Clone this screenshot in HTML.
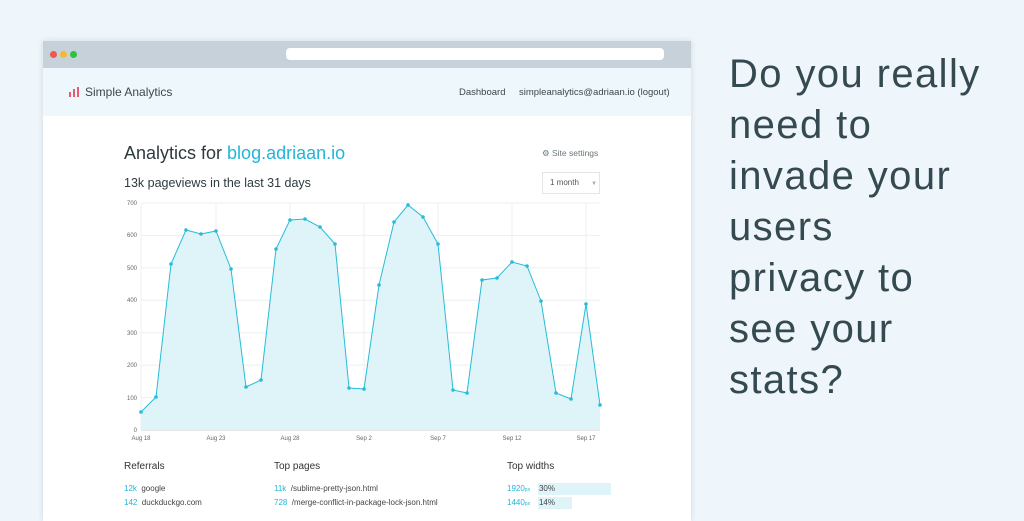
<!DOCTYPE html>
<html><head><style>
body{margin:0;width:1024px;height:512px;overflow:hidden;background:#eef6fb;font-family:"Liberation Sans",sans-serif;position:relative}
.win{position:absolute;left:43px;top:41px;width:648px;height:480px;background:#fff;box-shadow:0 0 6px rgba(0,0,0,.12)}
.bar{height:27px;background:#c6d1da;position:relative}
.dot{position:absolute;top:10px;width:7px;height:7px;border-radius:50%}
.url{position:absolute;left:243px;top:7px;width:378px;height:12px;background:#fff;border-radius:4px}
.hdr{height:48px;background:#eef8fc;position:relative;font-size:11px;color:#3a474d}
.abs{position:absolute;white-space:nowrap}
.big{position:absolute;left:729px;top:49px;font-size:40px;line-height:51px;color:#344a50;letter-spacing:1.4px}
.n{color:#21b6d7}
</style></head><body>
<div class="win">
<div class="bar"><div class="dot" style="left:7px;background:#f0574f"></div><div class="dot" style="left:17px;background:#f5b92f"></div><div class="dot" style="left:27px;background:#2cc23e"></div><div class="url"></div></div>
<div class="hdr">
<svg class="abs" style="left:26px;top:19px" width="10" height="10"><rect x="0" y="5" width="2" height="5" fill="#e85a70"/><rect x="4" y="2" width="2" height="8" fill="#e85a70"/><rect x="8" y="0" width="2" height="10" fill="#e85a70"/></svg>
<div class="abs" style="left:42px;top:17px;font-size:12px">Simple Analytics</div>
<div class="abs" style="left:416px;top:19px;font-size:9.5px">Dashboard</div>
<div class="abs" style="left:476px;top:19px;font-size:9.5px">simpleanalytics@adriaan.io (logout)</div>
</div>
<div class="abs" style="left:81px;top:102px;font-size:18px;color:#2d3a40">Analytics for <span class="n">blog.adriaan.io</span></div>
<div class="abs" style="left:499px;top:107px;font-size:8.5px;color:#6a767c">⚙ Site settings</div>
<div class="abs" style="left:81px;top:135px;font-size:12.5px;color:#2d3a40">13k pageviews in the last 31 days</div>
<div class="abs" style="left:499px;top:131px;width:56px;height:20px;border:1px solid #e2e6e8;font-size:8px;color:#555;line-height:20px;text-indent:7px">1 month <span style="color:#aaa;margin-left:10px;font-size:6px">▼</span></div>
<div class="abs" style="left:81px;top:420px;font-size:10px;color:#333">Referrals</div>
<div class="abs" style="left:231px;top:420px;font-size:10px;color:#333">Top pages</div>
<div class="abs" style="left:464px;top:420px;font-size:10px;color:#333">Top widths</div>
<div class="abs" style="left:81px;top:443px;font-size:8px;color:#444"><span class="n">12k</span>&nbsp; google</div>
<div class="abs" style="left:81px;top:457px;font-size:8px;color:#444"><span class="n">142</span>&nbsp; duckduckgo.com</div>
<div class="abs" style="left:231px;top:443px;font-size:8px;color:#444"><span class="n">11k</span>&nbsp; /sublime-pretty-json.html</div>
<div class="abs" style="left:231px;top:457px;font-size:8px;color:#444"><span class="n">728</span>&nbsp; /merge-conflict-in-package-lock-json.html</div>
<div class="abs" style="left:495px;top:442px;width:73px;height:12px;background:#dff4f9"></div>
<div class="abs" style="left:495px;top:456px;width:34px;height:12px;background:#dff4f9"></div>
<div class="abs" style="left:464px;top:443px;font-size:8px;color:#444"><span class="n">1920<small style="font-size:5px">px</small></span>&nbsp;&nbsp;&nbsp; 30%</div>
<div class="abs" style="left:464px;top:457px;font-size:8px;color:#444"><span class="n">1440<small style="font-size:5px">px</small></span>&nbsp;&nbsp;&nbsp; 14%</div>
</div>
<svg class="abs" style="left:0;top:0" width="700" height="450">
<g stroke="#eceff1" stroke-width="1">
<line x1="141" y1="203" x2="600" y2="203"/><line x1="141" y1="235.4" x2="600" y2="235.4"/><line x1="141" y1="267.9" x2="600" y2="267.9"/><line x1="141" y1="300.3" x2="600" y2="300.3"/><line x1="141" y1="332.7" x2="600" y2="332.7"/><line x1="141" y1="365.1" x2="600" y2="365.1"/><line x1="141" y1="397.6" x2="600" y2="397.6"/>
<line x1="141" y1="203" x2="141" y2="430"/><line x1="216" y1="203" x2="216" y2="430"/><line x1="290" y1="203" x2="290" y2="430"/><line x1="364" y1="203" x2="364" y2="430"/><line x1="438" y1="203" x2="438" y2="430"/><line x1="512" y1="203" x2="512" y2="430"/><line x1="586" y1="203" x2="586" y2="430"/>
</g>
<line x1="141" y1="430" x2="600" y2="430" stroke="#ccc"/>
<g font-size="6" fill="#666" text-anchor="end" font-family="Liberation Sans">
<text x="137" y="205">700</text><text x="137" y="237">600</text><text x="137" y="270">500</text><text x="137" y="302">400</text><text x="137" y="335">300</text><text x="137" y="367">200</text><text x="137" y="400">100</text><text x="137" y="432">0</text></g>
<g font-size="6" fill="#666" text-anchor="middle" font-family="Liberation Sans">
<text x="141" y="440">Aug 18</text><text x="216" y="440">Aug 23</text><text x="290" y="440">Aug 28</text><text x="364" y="440">Sep 2</text><text x="438" y="440">Sep 7</text><text x="512" y="440">Sep 12</text><text x="586" y="440">Sep 17</text></g>
<polygon fill="#dff4f9" points="141,430 141,412 156,397 171,264 186,230 201,234 216,231 231,269 246,387 261,380 276,249 290,220 305,219 320,227 335,244 349,388 364,389 379,285 394,222 408,205 423,217 438,244 453,390 467,393 482,280 497,278 512,262 527,266 541,301 556,393 571,399 586,304 600,405 600,430"/>
<polyline fill="none" stroke="#27bcd8" stroke-width="1" points="141,412 156,397 171,264 186,230 201,234 216,231 231,269 246,387 261,380 276,249 290,220 305,219 320,227 335,244 349,388 364,389 379,285 394,222 408,205 423,217 438,244 453,390 467,393 482,280 497,278 512,262 527,266 541,301 556,393 571,399 586,304 600,405"/>
<g fill="#27bcd8">
<circle cx="141" cy="412" r="1.8"/><circle cx="156" cy="397" r="1.8"/><circle cx="171" cy="264" r="1.8"/><circle cx="186" cy="230" r="1.8"/><circle cx="201" cy="234" r="1.8"/><circle cx="216" cy="231" r="1.8"/><circle cx="231" cy="269" r="1.8"/><circle cx="246" cy="387" r="1.8"/><circle cx="261" cy="380" r="1.8"/><circle cx="276" cy="249" r="1.8"/><circle cx="290" cy="220" r="1.8"/><circle cx="305" cy="219" r="1.8"/><circle cx="320" cy="227" r="1.8"/><circle cx="335" cy="244" r="1.8"/><circle cx="349" cy="388" r="1.8"/><circle cx="364" cy="389" r="1.8"/><circle cx="379" cy="285" r="1.8"/><circle cx="394" cy="222" r="1.8"/><circle cx="408" cy="205" r="1.8"/><circle cx="423" cy="217" r="1.8"/><circle cx="438" cy="244" r="1.8"/><circle cx="453" cy="390" r="1.8"/><circle cx="467" cy="393" r="1.8"/><circle cx="482" cy="280" r="1.8"/><circle cx="497" cy="278" r="1.8"/><circle cx="512" cy="262" r="1.8"/><circle cx="527" cy="266" r="1.8"/><circle cx="541" cy="301" r="1.8"/><circle cx="556" cy="393" r="1.8"/><circle cx="571" cy="399" r="1.8"/><circle cx="586" cy="304" r="1.8"/><circle cx="600" cy="405" r="1.8"/>
</g>
</svg>
<div class="big">Do you really<br>need to<br>invade your<br>users<br>privacy to<br>see your<br>stats?</div>
</body></html>
